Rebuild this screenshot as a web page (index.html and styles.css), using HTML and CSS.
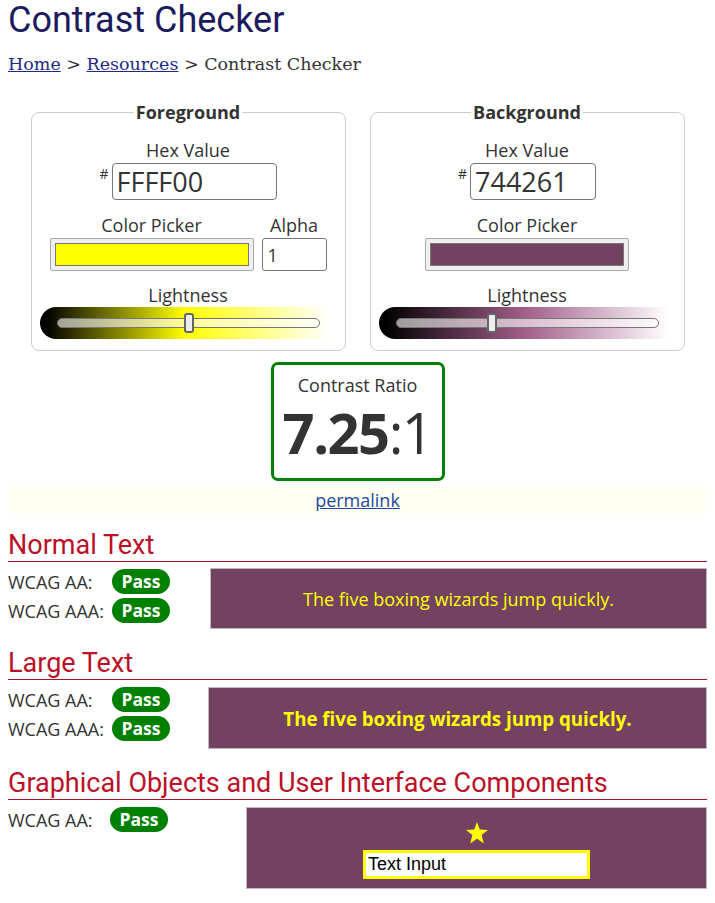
FILE: index.html
```html
<!DOCTYPE html>
<html lang="en">
<head>
<meta charset="utf-8">
<title>Contrast Checker</title>
<link rel="stylesheet" href="styles.css">
</head>
<body>
<h1 class="title">Contrast Checker</h1>
<nav class="crumbs"><a href="#">Home</a> &gt; <a href="#">Resources</a> &gt; Contrast Checker</nav>

<div class="panels">
  <fieldset class="panel">
    <legend class="legend">Foreground</legend>
    <div class="panel-body">
      <div class="lbl lbl-hex">Hex Value</div>
      <div class="hex-row"><span class="hash">#</span><input class="hex hex-fg" type="text" value="FFFF00"></div>
      <div class="pick-row">
        <div class="pick-col">
          <div class="lbl">Color Picker</div>
          <div class="picker"><span class="swatch swatch-fg"></span></div>
        </div>
        <div class="alpha-col">
          <div class="lbl">Alpha</div>
          <input class="alpha" type="text" value="1">
        </div>
      </div>
      <div class="lbl lbl-light">Lightness</div>
      <div class="band band-fg"><input class="range" type="range" min="0" max="100" value="50"></div>
    </div>
  </fieldset>

  <fieldset class="panel">
    <legend class="legend">Background</legend>
    <div class="panel-body">
      <div class="lbl lbl-hex">Hex Value</div>
      <div class="hex-row"><span class="hash">#</span><input class="hex hex-bg" type="text" value="744261"></div>
      <div class="pick-row">
        <div class="pick-col">
          <div class="lbl">Color Picker</div>
          <div class="picker"><span class="swatch swatch-bg"></span></div>
        </div>
      </div>
      <div class="lbl lbl-light">Lightness</div>
      <div class="band band-bg"><input class="range" type="range" min="0" max="100" value="36"></div>
    </div>
  </fieldset>
</div>

<div class="ratio-wrap">
  <div class="ratio-box">
    <div class="ratio-lbl">Contrast Ratio</div>
    <div class="ratio"><b class="ratio-num">7.25</b>:1</div>
  </div>
</div>

<div class="perma"><a href="#">permalink</a></div>

<h2 class="sec-title">Normal Text</h2>
<div class="sec-row">
  <div class="results res-normal">
    <div class="res-line"><span class="res-lbl">WCAG AA:</span><span class="pass">Pass</span></div>
    <div class="res-line"><span class="res-lbl">WCAG AAA:</span><span class="pass">Pass</span></div>
  </div>
  <div class="sample sample-normal">The five boxing wizards jump quickly.</div>
</div>

<h2 class="sec-title">Large Text</h2>
<div class="sec-row">
  <div class="results res-large">
    <div class="res-line"><span class="res-lbl">WCAG AA:</span><span class="pass">Pass</span></div>
    <div class="res-line"><span class="res-lbl">WCAG AAA:</span><span class="pass">Pass</span></div>
  </div>
  <div class="sample sample-large">The five boxing wizards jump quickly.</div>
</div>

<h2 class="sec-title">Graphical Objects and User Interface Components</h2>
<div class="sec-row">
  <div class="results res-ui">
    <div class="res-line"><span class="res-lbl res-lbl-ui">WCAG AA:</span><span class="pass">Pass</span></div>
  </div>
  <div class="sample sample-ui">
    <svg class="star" width="24" height="24" viewBox="0 0 24 24" aria-hidden="true"><polygon points="12,1 14.8,8.6 23,8.9 16.6,14 18.8,22.5 12,17.7 5.2,22.5 7.4,14 1,8.9 9.2,8.6" fill="#ffff00"/></svg>
    <input class="ui-input" type="text" value="Text Input">
  </div>
</div>
</body>
</html>
```
FILE: styles.css
```css
html, body { background: #fff; }
body {
  margin: 0 8px;
  font-family: "Open Sans", "DejaVu Sans", sans-serif;
  font-size: 18px;
  color: #333;
}
.title {
  margin: 0;
  font-family: Roboto, "Liberation Sans", sans-serif;
  font-weight: 400;
  font-size: 36px;
  line-height: 41px;
  color: #1b1b5e;
}
.crumbs {
  margin-top: 12px;
  font-family: "DejaVu Serif", serif;
  font-size: 17.5px;
  line-height: 22px;
  color: #333;
}
.crumbs a { color: #1c2a86; }

.panels {
  display: flex;
  justify-content: center;
  gap: 24px;
  margin-top: 26px;
}
.panel {
  width: 315px;
  box-sizing: border-box;
  margin: 0;
  padding: 0 0 11px;
  border: 1px solid #ccc;
  border-radius: 8px;
  min-inline-size: 0;
}
.legend {
  margin: 0 auto;
  padding: 0 2px;
  font-weight: 700;
  font-size: 18px;
  line-height: 23px;
  color: #333;
}
.panel-body {
  display: flex;
  flex-direction: column;
  align-items: center;
}
.lbl {
  font-size: 18px;
  line-height: 23px;
  text-align: center;
}
.lbl-hex { margin-top: 15px; }
.lbl-light { margin-top: 13px; }
.hex-row {
  display: flex;
  align-items: flex-start;
  gap: 3px;
  margin-top: 1px;
}
.hash {
  font-size: 14px;
  line-height: 14px;
  margin-top: 4px;
}
.hex {
  box-sizing: border-box;
  height: 37px;
  border: 1px solid #767676;
  border-radius: 4px;
  padding: 0 4px;
  font-family: "Open Sans", sans-serif;
  font-size: 27px;
  color: #333;
  margin: 0;
}
.hex-fg { width: 165px; }
.hex-bg { width: 126px; }
.pick-row {
  display: flex;
  gap: 8px;
  margin-top: 14px;
}
.pick-col, .alpha-col {
  display: flex;
  flex-direction: column;
  align-items: center;
}
.picker {
  box-sizing: border-box;
  width: 204px;
  height: 33px;
  margin-top: 1px;
  padding: 4px 4px;
  background: #efefef;
  border: 1px solid #a9a9a9;
  border-radius: 2px;
  display: flex;
}
.swatch {
  flex: 1;
  border: 1px solid #777;
}
.swatch-fg { background: #ffff00; }
.swatch-bg { background: #744261; }
.alpha {
  box-sizing: border-box;
  width: 65px;
  height: 33px;
  margin: 1px 0 0;
  border: 1px solid #767676;
  border-radius: 3px;
  padding: 0 5px;
  font-family: "Open Sans", sans-serif;
  font-size: 18px;
  color: #333;
}
.band {
  box-sizing: border-box;
  width: 290px;
  height: 32px;
  margin-right: 6px;
  padding-left: 17px;
  border-radius: 16px 0 0 16px;
  display: flex;
  align-items: center;
}
.band-fg { background: linear-gradient(to right, #000 2%, #ffff00 50%, #fff 100%); }
.band-bg { background: linear-gradient(to right, #000 2%, #a25d89 50%, #fff 100%); }
.range {
  -webkit-appearance: none;
  appearance: none;
  width: 263px;
  height: 20px;
  margin: 0;
  background: transparent;
}
.range::-webkit-slider-runnable-track {
  box-sizing: border-box;
  height: 10px;
  border: 1px solid #777;
  border-radius: 6px;
  background: rgba(255, 255, 255, 0.6);
}
.range::-webkit-slider-thumb {
  -webkit-appearance: none;
  appearance: none;
  box-sizing: border-box;
  width: 10px;
  height: 20px;
  margin-top: -6px;
  background: #eee;
  border: 2px solid #666;
  border-radius: 3px;
}

.ratio-wrap {
  display: flex;
  justify-content: center;
  margin-top: 11px;
}
.ratio-box {
  box-sizing: border-box;
  width: 174px;
  height: 119px;
  border: 3px solid #008000;
  border-radius: 7px;
  padding-top: 9px;
  text-align: center;
}
.ratio-lbl { font-size: 18px; line-height: 23px; }
.ratio {
  margin-top: 6px;
  font-size: 56px;
  line-height: 58px;
  letter-spacing: -1.5px;
  color: #333;
}
.ratio-num { font-weight: 700; }

.perma {
  margin-top: 6px;
  height: 26px;
  line-height: 26px;
  background: #fffff2;
  text-align: center;
  font-size: 18px;
}
.perma a { color: #1f49a0; }

.sec-title {
  margin: 16px 0 0;
  font-family: Roboto, "Liberation Sans", sans-serif;
  font-weight: 400;
  font-size: 27px;
  line-height: 32px;
  color: #bb1128;
  border-bottom: 1px solid #a3192a;
}
.sec-title + .sec-row { margin-top: 5px; }
.sec-row + .sec-title { margin-top: 18px; }
.sec-row {
  display: flex;
  align-items: flex-start;
}
.results { flex: none; }
.res-normal { width: 202px; }
.res-large { width: 200px; }
.res-ui { width: 238px; }
.res-line {
  display: flex;
  align-items: center;
  height: 29px;
}
.res-lbl {
  width: 104px;
  font-size: 18px;
}
.res-lbl-ui { width: 102px; }
.pass {
  box-sizing: border-box;
  width: 58px;
  height: 25px;
  line-height: 25px;
  border-radius: 13px;
  background: #008000;
  color: #fff;
  font-weight: 700;
  font-size: 17.5px;
  text-align: center;
}
.sample {
  flex: 1;
  box-sizing: border-box;
  background: #744261;
  border: 1px solid #bbb;
  color: #ffff00;
  display: flex;
  align-items: center;
  justify-content: center;
}
.sample-normal { height: 61px; margin-top: 1px; font-size: 18px; }
.sample-large { height: 62px; margin-top: 2px; font-size: 18.7px; font-weight: 700; }
.sample-ui {
  height: 82px;
  margin-top: 2px;
  flex-direction: column;
  justify-content: flex-start;
  padding-top: 13px;
}
.star { display: block; }
.ui-input {
  box-sizing: border-box;
  width: 227px;
  height: 29px;
  margin: 5px 0 0;
  border: 3px solid #ffff00;
  background: #fff;
  padding: 0 2px;
  font-family: "Liberation Sans", Arial, sans-serif;
  font-size: 18px;
  color: #000;
}
```
